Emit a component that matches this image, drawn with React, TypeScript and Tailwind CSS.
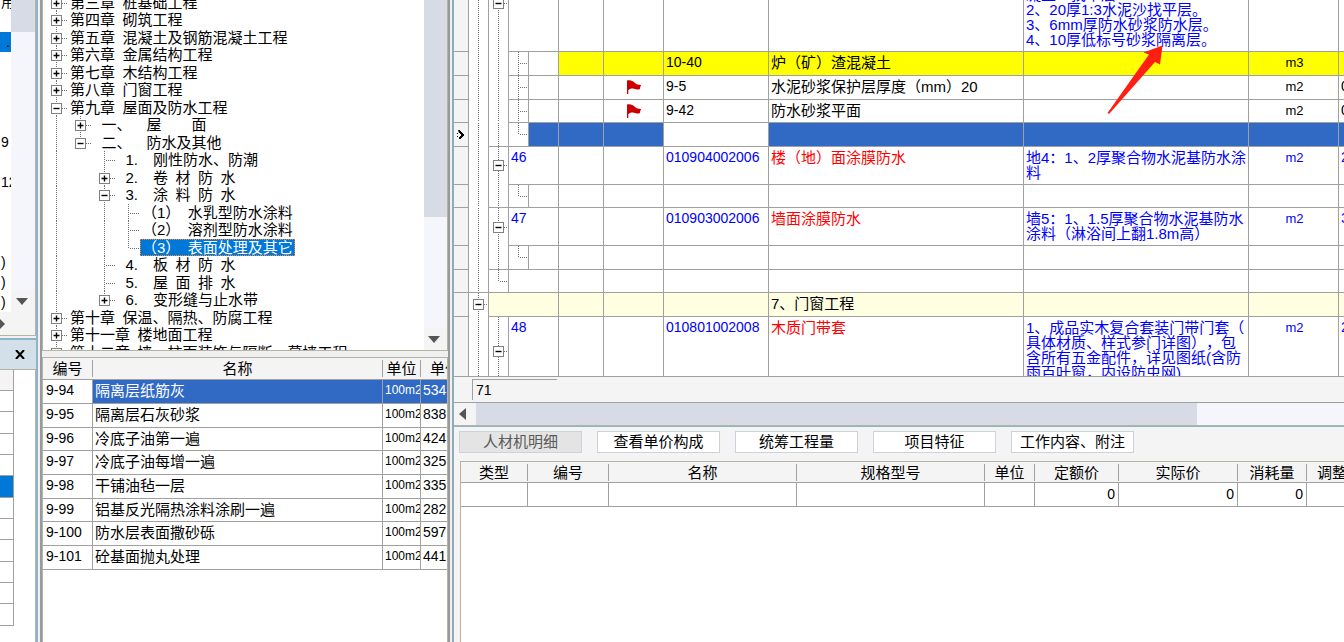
import React, { useState } from "react";
import clsx from "clsx";

type GuideKind = "none" | "line" | "mid" | "end" | "plus" | "minus";

interface GuideProps {
  kind: GuideKind;
  width: number;
  height: number;
  y?: number;
  down?: boolean;
}

// dotted connector cell, shared by the chapter tree and the bill grid
const Guide = ({ kind, width, height, y, down = true }: GuideProps) => {
  const cx = Math.floor(width / 2) + 0.5;
  const cy = (y ?? Math.floor(height / 2)) + 0.5;
  const boxed = kind === "plus" || kind === "minus";
  const bottom = kind === "end" || !down ? cy + 0.5 : height;
  return (
    <svg width={width} height={height} className="block shrink-0" aria-hidden="true">
      {kind !== "none" && (
        <g stroke="#6e6e6e" strokeDasharray="1 1" fill="none">
          <path d={`M${cx} 0V${bottom}`} />
          {kind !== "line" && <path d={`M${cx + 1.5} ${cy}H${width}`} />}
        </g>
      )}
      {boxed && (
        <>
          <rect x={cx - 5} y={cy - 5} width="10" height="10" fill="#fff" stroke="#808080" />
          <path
            d={`M${cx - 3} ${cy}h6${kind === "plus" ? `M${cx} ${cy - 3}v6` : ""}`}
            stroke="#000"
            strokeWidth="1.4"
          />
        </>
      )}
    </svg>
  );
};

interface TreeItem {
  label: string;
  guides: GuideKind[];
  last?: boolean;
}

const chapters: TreeItem[] = [
  { label: "第三章\u2002桩基础工程", guides: ["plus"] },
  { label: "第四章\u2002砌筑工程", guides: ["plus"] },
  { label: "第五章\u2002混凝土及钢筋混凝土工程", guides: ["plus"] },
  { label: "第六章\u2002金属结构工程", guides: ["plus"] },
  { label: "第七章\u2002木结构工程", guides: ["plus"] },
  { label: "第八章\u2002门窗工程", guides: ["plus"] },
  { label: "第九章\u2002屋面及防水工程", guides: ["minus"] },
  { label: "\u2002一、\u3000屋\u3000\u3000面", guides: ["line", "plus"] },
  { label: "\u2002二、\u3000防水及其他", guides: ["line", "minus"], last: true },
  { label: "\u20021.\u3000刚性防水、防潮", guides: ["line", "none", "mid"] },
  { label: "\u20022.\u3000卷\u2002材\u2002防\u2002水", guides: ["line", "none", "plus"] },
  { label: "\u20023.\u3000涂\u2002料\u2002防\u2002水", guides: ["line", "none", "minus"] },
  { label: "（1）\u2002水乳型防水涂料", guides: ["line", "none", "line", "mid"] },
  { label: "（2）\u2002溶剂型防水涂料", guides: ["line", "none", "line", "mid"] },
  { label: "（3）\u2002表面处理及其它", guides: ["line", "none", "line", "end"] },
  { label: "\u20024.\u3000板\u2002材\u2002防\u2002水", guides: ["line", "none", "mid"] },
  { label: "\u20025.\u3000屋\u2002面\u2002排\u2002水", guides: ["line", "none", "mid"] },
  { label: "\u20026.\u3000变形缝与止水带", guides: ["line", "none", "plus"], last: true },
  { label: "第十章\u2002保温、隔热、防腐工程", guides: ["plus"] },
  { label: "第十一章\u2002楼地面工程", guides: ["plus"] },
  { label: "第十二章\u2002墙、柱面装饰与隔断、幕墙工程", guides: ["plus"] },
];

const quotas = [
  { code: "9-94", name: "隔离层纸筋灰", price: "534" },
  { code: "9-95", name: "隔离层石灰砂浆", price: "838" },
  { code: "9-96", name: "冷底子油第一遍", price: "424" },
  { code: "9-97", name: "冷底子油每增一遍", price: "325" },
  { code: "9-98", name: "干铺油毡一层", price: "335" },
  { code: "9-99", name: "铝基反光隔热涂料涂刷一遍", price: "282" },
  { code: "9-100", name: "防水层表面撒砂砾", price: "597" },
  { code: "9-101", name: "砼基面抛丸处理", price: "441" },
];

interface BillRow {
  level: 0 | 1 | 2;
  height: number;
  h: string;
  outer?: GuideKind;
  inner?: GuideKind;
  innerY?: number;
  leaf?: GuideKind;
  // the next row starts a new branch, so the line runs under the tree cells too
  closesOuter?: boolean;
  closesInner?: boolean;
  no?: string;
  flag?: boolean;
  code?: string;
  name?: string;
  feature?: string[];
  unit?: string;
  qty?: string;
  tone?: "yellow" | "selected" | "section" | "bill";
  bottom?: boolean;
}

const bill: BillRow[] = [
  {
    level: 1, height: 51, h: "h-[51px]", inner: "minus", innerY: 3, tone: "bill", bottom: true,
    feature: ["凝土一找平层", "2、20厚1:3水泥沙找平层。", "3、6mm厚防水砂浆防水层。", "4、10厚低标号砂浆隔离层。"],
  },
  { level: 2, height: 23, h: "h-[23px]", inner: "line", leaf: "mid", code: "10-40", name: "炉（矿）渣混凝土", unit: "m3", tone: "yellow" },
  { level: 2, height: 23, h: "h-[23px]", inner: "line", leaf: "mid", flag: true, code: "9-5", name: "水泥砂浆保护层厚度（mm）20", unit: "m2", qty: "0" },
  { level: 2, height: 22, h: "h-[22px]", inner: "line", leaf: "mid", flag: true, code: "9-42", name: "防水砂浆平面", unit: "m2", qty: "0" },
  { level: 2, height: 23, h: "h-[23px]", inner: "line", leaf: "end", tone: "selected", closesInner: true },
  {
    level: 1, height: 37, h: "h-[37px]", inner: "minus", innerY: 18, no: "46", code: "010904002006", name: "楼（地）面涂膜防水",
    feature: ["地4：1、2厚聚合物水泥基防水涂", "料"], unit: "m2", qty: "2", tone: "bill",
  },
  { level: 2, height: 22, h: "h-[22px]", inner: "line", leaf: "end", closesInner: true },
  {
    level: 1, height: 37, h: "h-[37px]", inner: "minus", innerY: 19, no: "47", code: "010903002006", name: "墙面涂膜防水",
    feature: ["墙5：1、1.5厚聚合物水泥基防水", "涂料（淋浴间上翻1.8m高）"], unit: "m2", qty: "3", tone: "bill",
  },
  { level: 2, height: 23, h: "h-[23px]", inner: "line", leaf: "end", closesInner: true },
  { level: 1, height: 22, h: "h-[22px]", inner: "end", closesInner: true, closesOuter: true },
  { level: 0, height: 23, h: "h-[23px]", outer: "minus", name: "7、门窗工程", tone: "section" },
  {
    level: 1, height: 59, h: "h-[59px]", inner: "minus", innerY: 34, no: "48", code: "010801002008", name: "木质门带套",
    feature: ["1、成品实木复合套装门带门套（", "具体材质、样式参门详图），包", "含所有五金配件，详见图纸(含防", "雨百叶窗，内设防虫网)"],
    unit: "m2", qty: "2", tone: "bill", closesInner: true, closesOuter: true,
  },
];

const details = [
  { title: "类型", width: "w-[67px]" },
  { title: "编号", width: "w-[81px]" },
  { title: "名称", width: "w-[188px]" },
  { title: "规格型号", width: "w-[188px]" },
  { title: "单位", width: "w-[50px]" },
  { title: "定额价", width: "w-[84px]", value: "0" },
  { title: "实际价", width: "w-[119px]", value: "0" },
  { title: "消耗量", width: "w-[69px]", value: "0" },
];

const tabs = ["人材机明细", "查看单价构成", "统筹工程量", "项目特征", "工作内容、附注"];

const projectRows = ["用", "", ".", "", "", "", "", "9", "", "12", "", "", "", ")", ")", ")"];

const DownButton = () => (
  <button aria-label="向下滚动" className="flex h-[22px] w-full items-center justify-center bg-[#f4f4f4] pr-[3px]">
    <svg width="12" height="7">
      <path d="M0 0h12l-6 7z" fill="#555" />
    </svg>
  </button>
);

const Flag = () => (
  <svg width="14" height="15" viewBox="0 0 14 15" aria-hidden="true">
    <path d="M0 .5C3-.2 6 .6 8 3c1.500 1.600 3.500 1.800 6 2-.3 1.500-1.200 2.500-1 4-2 1-4 .5-6-.2C5 8 3 8.500 1.300 10V14H0z" fill="#c00" />
  </svg>
);

const ProjectPane = () => (
  <aside className="flex w-[36px] shrink-0 flex-col">
    <div className="flex h-[336px] flex-col border-r border-b border-[#b5b2a6] bg-[#f4f4f4]">
      <div className="flex min-h-0 flex-1">
        <ul className="-mt-2 w-[11px] overflow-hidden bg-white">
          {projectRows.map((text, i) => (
            <li
              key={i}
              className={clsx("h-5 text-[14px] leading-5 whitespace-nowrap", text === "." ? "bg-[#0078d7] pl-[6px]" : "pl-px")}
            >
              {text}
            </li>
          ))}
        </ul>
        <div className="flex flex-1 flex-col bg-[#f4f6fb]">
          <div className="h-8 bg-[#d6dbe5]" />
          <div className="flex-1" />
          <DownButton />
        </div>
      </div>
      <button aria-label="向右滚动" className="flex h-[23px] items-center">
        <svg width="5" height="10">
          <path d="M0 0l5 5-5 5z" fill="#555" />
        </svg>
      </button>
    </div>
    <div className="mt-[2px] flex h-8 items-center justify-center border-t-2 border-b border-t-[#8fb3c8] border-b-[#b5b2a6] bg-[#d3e0e9] pl-1">
      <button aria-label="关闭">
        <svg width="10" height="9">
          <path d="M1 0l8 9M9 0L1 9" stroke="#000" strokeWidth="2" />
        </svg>
      </button>
    </div>
    <div className="flex-1 border-r border-[#b5b2a6] bg-white">
      <div className="h-[21px] w-[14px] border-r border-b border-[#a0a0a0] bg-[#f4f4f4]" />
      {Array.from({ length: 11 }, (_, i) => (
        <div
          key={i}
          className={clsx("h-[21px] w-[14px] border-r border-b border-[#a0a0a0] nth-[3n]:h-[22px]", i === 4 && "bg-[#0078d7]")}
        />
      ))}
    </div>
  </aside>
);

const ChapterTree = () => (
  <section className="flex h-[351px] overflow-hidden border border-t-0 border-[#b5b2a6] bg-white">
    <ul className="-mt-[6px] min-w-0 flex-1 overflow-hidden pl-px">
      {chapters.map((item) => {
        const selected = item.label.startsWith("（3）");
        return (
          <li key={item.label} className="flex h-[17px] overflow-hidden even:h-[18px]">
            {item.guides.map((kind, i) => (
              <Guide
                key={i}
                kind={kind}
                width={24}
                height={18}
                down={!(item.last && i === item.guides.length - 1)}
              />
            ))}
            <span
              className={clsx(
                "h-[17px] px-[2px] leading-[17px] whitespace-pre",
                selected && "bg-[#0078d7] text-white outline-1 -outline-offset-1 outline-dotted outline-[#ff8728]"
              )}
            >
              {item.label}
            </span>
          </li>
        );
      })}
    </ul>
    <div className="flex w-[23px] flex-col bg-[#f4f6fb]">
      <div className="h-[217px] bg-[#d6dbe5]" />
      <div className="flex-1" />
      <DownButton />
    </div>
  </section>
);

const QuotaTable = () => {
  const [current, setCurrent] = useState("9-94");
  return (
    <section className="mt-[6px] min-h-0 flex-1 overflow-hidden border border-b-0 border-[#b5b2a6] bg-white">
      <table className="w-full table-fixed border-separate border-spacing-0">
        <thead>
          <tr className="h-[22px] bg-[#f4f4f4]">
            <th className="w-[50px] border-b border-[#a0a0a0] p-0 font-normal">
              <div className="my-[2px] border-r border-[#a0a0a0] leading-[17px]">编号</div>
            </th>
            <th className="border-b border-[#a0a0a0] p-0 font-normal">
              <div className="my-[2px] border-r border-[#a0a0a0] leading-[17px]">名称</div>
            </th>
            <th className="w-[38px] border-b border-[#a0a0a0] p-0 font-normal">
              <div className="my-[2px] border-r border-[#a0a0a0] leading-[17px]">单位</div>
            </th>
            <th className="w-[26px] overflow-hidden border-b border-[#a0a0a0] p-0 pl-[9px] text-left font-normal whitespace-nowrap">
              单价
            </th>
          </tr>
        </thead>
        <tbody>
          {quotas.map((q) => {
            const tone = q.code === current ? "bg-[#316ac5] text-white" : "";
            return (
              <tr key={q.code} onClick={() => setCurrent(q.code)} className="h-6 leading-[15px] nth-[3n]:h-[23px]">
                <td className="border-r border-b border-[#a0a0a0] p-0 pb-[2px] pl-[3px] text-[14px]">{q.code}</td>
                <td className={clsx("border-r border-b border-[#a0a0a0] p-0 pb-[2px] pl-[2px]", tone)}>{q.name}</td>
                <td className={clsx("overflow-hidden border-r border-b border-[#a0a0a0] p-0 pb-[2px] pl-[2px] text-[12px]", tone)}>
                  100m2
                </td>
                <td className={clsx("border-b border-[#a0a0a0] p-0 pb-[2px] pl-[2px] text-[14px]", tone)}>{q.price}</td>
              </tr>
            );
          })}
        </tbody>
      </table>
    </section>
  );
};

const BillGridRow = ({ row }: { row: BillRow }) => {
  const selected = row.tone === "selected";
  const fill = clsx(
    row.tone === "yellow" && "bg-[#ffff00]",
    row.tone === "section" && "bg-[#ffffe1]",
    selected && "bg-[#316ac5]"
  );
  const ink = row.tone === "bill" ? "text-[#0000ff]" : "text-black";
  const cell = "border-r border-b border-[#a0a0a0] p-0 align-top";
  const box = clsx(row.h, "overflow-hidden whitespace-nowrap pt-[3px] pl-[2px] leading-[15px]");

  return (
    <tr className={ink}>
      <td className={clsx(cell, "bg-[#f4f4f4]")}>
        {selected && (
          <svg width="14" height="23" className="block" aria-hidden="true">
            <path d="M4 7h2v1h1v1h1v1h1v1h1v2h-1v1h-1v1h-1v1h-2v-2h1v-1h1v-2h-1v-1h-1zM3 10h1v1h-1zM3 13h1v1h-1z" />
            <path d="M4 12.500h4" stroke="#f4f4f4" strokeDasharray="1 1" />
          </svg>
        )}
      </td>
      <td className={clsx("border-r border-[#a0a0a0] p-0 align-top", row.closesOuter && "border-b")}>
        <Guide kind={row.outer ?? "line"} width={19} height={row.height} />
      </td>
      {row.level > 0 && (
        <td className={clsx("border-r border-[#a0a0a0] p-0 align-top", row.closesInner && "border-b")}>
          <Guide kind={row.inner ?? "line"} width={19} height={row.height} y={row.innerY} />
        </td>
      )}
      {row.level === 2 && (
        <td className={cell}>
          <Guide kind={row.leaf ?? "none"} width={19} height={row.height} />
        </td>
      )}
      <td
        colSpan={row.level === 2 ? 1 : row.level === 1 ? 2 : 3}
        className={clsx(cell, row.tone !== "yellow" && fill)}
      >
        <div className={clsx(box, "text-[14px]")}>{row.no}</div>
      </td>
      <td className={clsx(cell, fill)} />
      <td className={clsx(cell, fill)}>
        <div className={clsx(row.h, "flex items-center justify-center")}>{row.flag && <Flag />}</div>
      </td>
      <td className={clsx(cell, !selected && fill)}>
        <div className={clsx(box, "text-[14px]")}>{row.code}</div>
      </td>
      <td className={clsx(cell, fill, row.tone === "bill" && "text-[#ff0000]")}>
        <div className={box}>{row.name}</div>
      </td>
      <td className={clsx(cell, fill)}>
        <div className={clsx(box, row.bottom && "flex flex-col justify-end pb-1")}>
          {row.feature?.map((line) => (
            <p key={line}>{line}</p>
          ))}
        </div>
      </td>
      <td className={clsx(cell, fill)}>
        <div className={clsx(box, "text-center text-[13px]")}>{row.unit}</div>
      </td>
      <td className={clsx("border-b border-[#a0a0a0] p-0 align-top", fill)}>
        <div className={clsx(box, "text-[14px]")}>{row.qty}</div>
      </td>
    </tr>
  );
};

const BillGrid = () => (
  <section className="relative shrink-0 bg-white">
    <table className="w-full table-fixed border-separate border-spacing-0">
      <colgroup>
        <col className="w-[15px]" />
        <col className="w-[20px]" />
        <col className="w-[20px]" />
        <col className="w-[20px]" />
        <col className="w-[30px]" />
        <col className="w-[45px]" />
        <col className="w-[60px]" />
        <col className="w-[105px]" />
        <col className="w-[255px]" />
        <col className="w-[225px]" />
        <col className="w-[90px]" />
        <col />
      </colgroup>
      <tbody>
        {bill.map((row, i) => (
          <BillGridRow key={i} row={row} />
        ))}
      </tbody>
    </table>
    <svg width="60" height="72" className="absolute top-[44px] left-[652px]" aria-hidden="true">
      <path d="M56.500 1.500L37.500 8.500l5.500 2L1.500 69l1.500 1L49 18l5 2.500z" fill="#ff1f12" />
    </svg>
  </section>
);

const DetailTable = () => (
  <section className="mt-2 ml-[6px] min-h-0 flex-1 overflow-hidden border-t border-l border-[#b5b2a6] bg-white">
    <table className="w-full table-fixed border-separate border-spacing-0">
      <thead>
        <tr className="h-[21px] bg-[#f4f4f4]">
          {details.map((d) => (
            <th key={d.title} className={clsx(d.width, "border-b border-[#a0a0a0] p-0 font-normal")}>
              <div className="border-r border-[#a0a0a0] leading-[17px]">{d.title}</div>
            </th>
          ))}
          <th className="overflow-hidden border-b border-[#a0a0a0] p-0 pl-[10px] text-left leading-[17px] font-normal whitespace-nowrap">
            调整
          </th>
        </tr>
      </thead>
      <tbody>
        <tr className="h-6">
          {details.map((d) => (
            <td key={d.title} className="border-r border-b border-[#a0a0a0] p-0 pr-[3px] text-right text-[14px] leading-[15px]">
              {d.value}
            </td>
          ))}
          <td className="border-b border-[#a0a0a0] p-0" />
        </tr>
      </tbody>
    </table>
  </section>
);

export default function App() {
  const [tab, setTab] = useState(tabs[0]);

  return (
    <div className="flex h-screen overflow-hidden bg-[#f0f0f0] font-['Liberation_Sans','Noto_Sans_CJK_SC',sans-serif] text-[15px] leading-[15px] text-black [text-spacing-trim:space-all]">
      <ProjectPane />
      <div className="w-[6px] shrink-0 border-r-2 border-l-2 border-r-[#9a9a9a] border-l-[#8fb3c8]" />
      <div className="flex w-[406px] shrink-0 flex-col">
        <ChapterTree />
        <QuotaTable />
      </div>
      <div className="w-[6px] shrink-0 border-r-2 border-l-2 border-r-[#8fabb8] border-l-[#9a9a9a]" />
      <main className="flex min-w-0 flex-1 flex-col bg-[#f4f4f4]">
        <BillGrid />
        <div className="flex h-[26px] shrink-0 items-center border-b border-[#a0a0a0] pl-[18px]">
          <output className="block h-[21px] w-[85px] border-t border-l border-[#a0a0a0] pl-[3px] text-[14px] leading-5">71</output>
        </div>
        <div className="flex h-[22px] shrink-0 bg-[#f4f6fb]">
          <button aria-label="向左滚动" className="flex w-[22px] items-center bg-[#f4f4f4] pl-[5px]">
            <svg width="7" height="12">
              <path d="M7 0v12L0 6z" fill="#555" />
            </svg>
          </button>
          <div className="w-[81%] bg-[#d6dbe5]" />
        </div>
        <div className="h-[2px] shrink-0 border-t border-b border-t-[#b5b2a6] border-b-[#8fb3c8]" />
        <nav className="mt-1 flex shrink-0 gap-[15px] pl-[5px]">
          {tabs.map((t) => (
            <button
              key={t}
              onClick={() => setTab(t)}
              className={clsx(
                "h-[22px] w-[123px] border border-[#cdd1dc] leading-5 whitespace-nowrap",
                t === tab ? "bg-[#e4e4e4] text-[#5a5a5a]" : "bg-white"
              )}
            >
              {t}
            </button>
          ))}
        </nav>
        <DetailTable />
      </main>
    </div>
  );
}
